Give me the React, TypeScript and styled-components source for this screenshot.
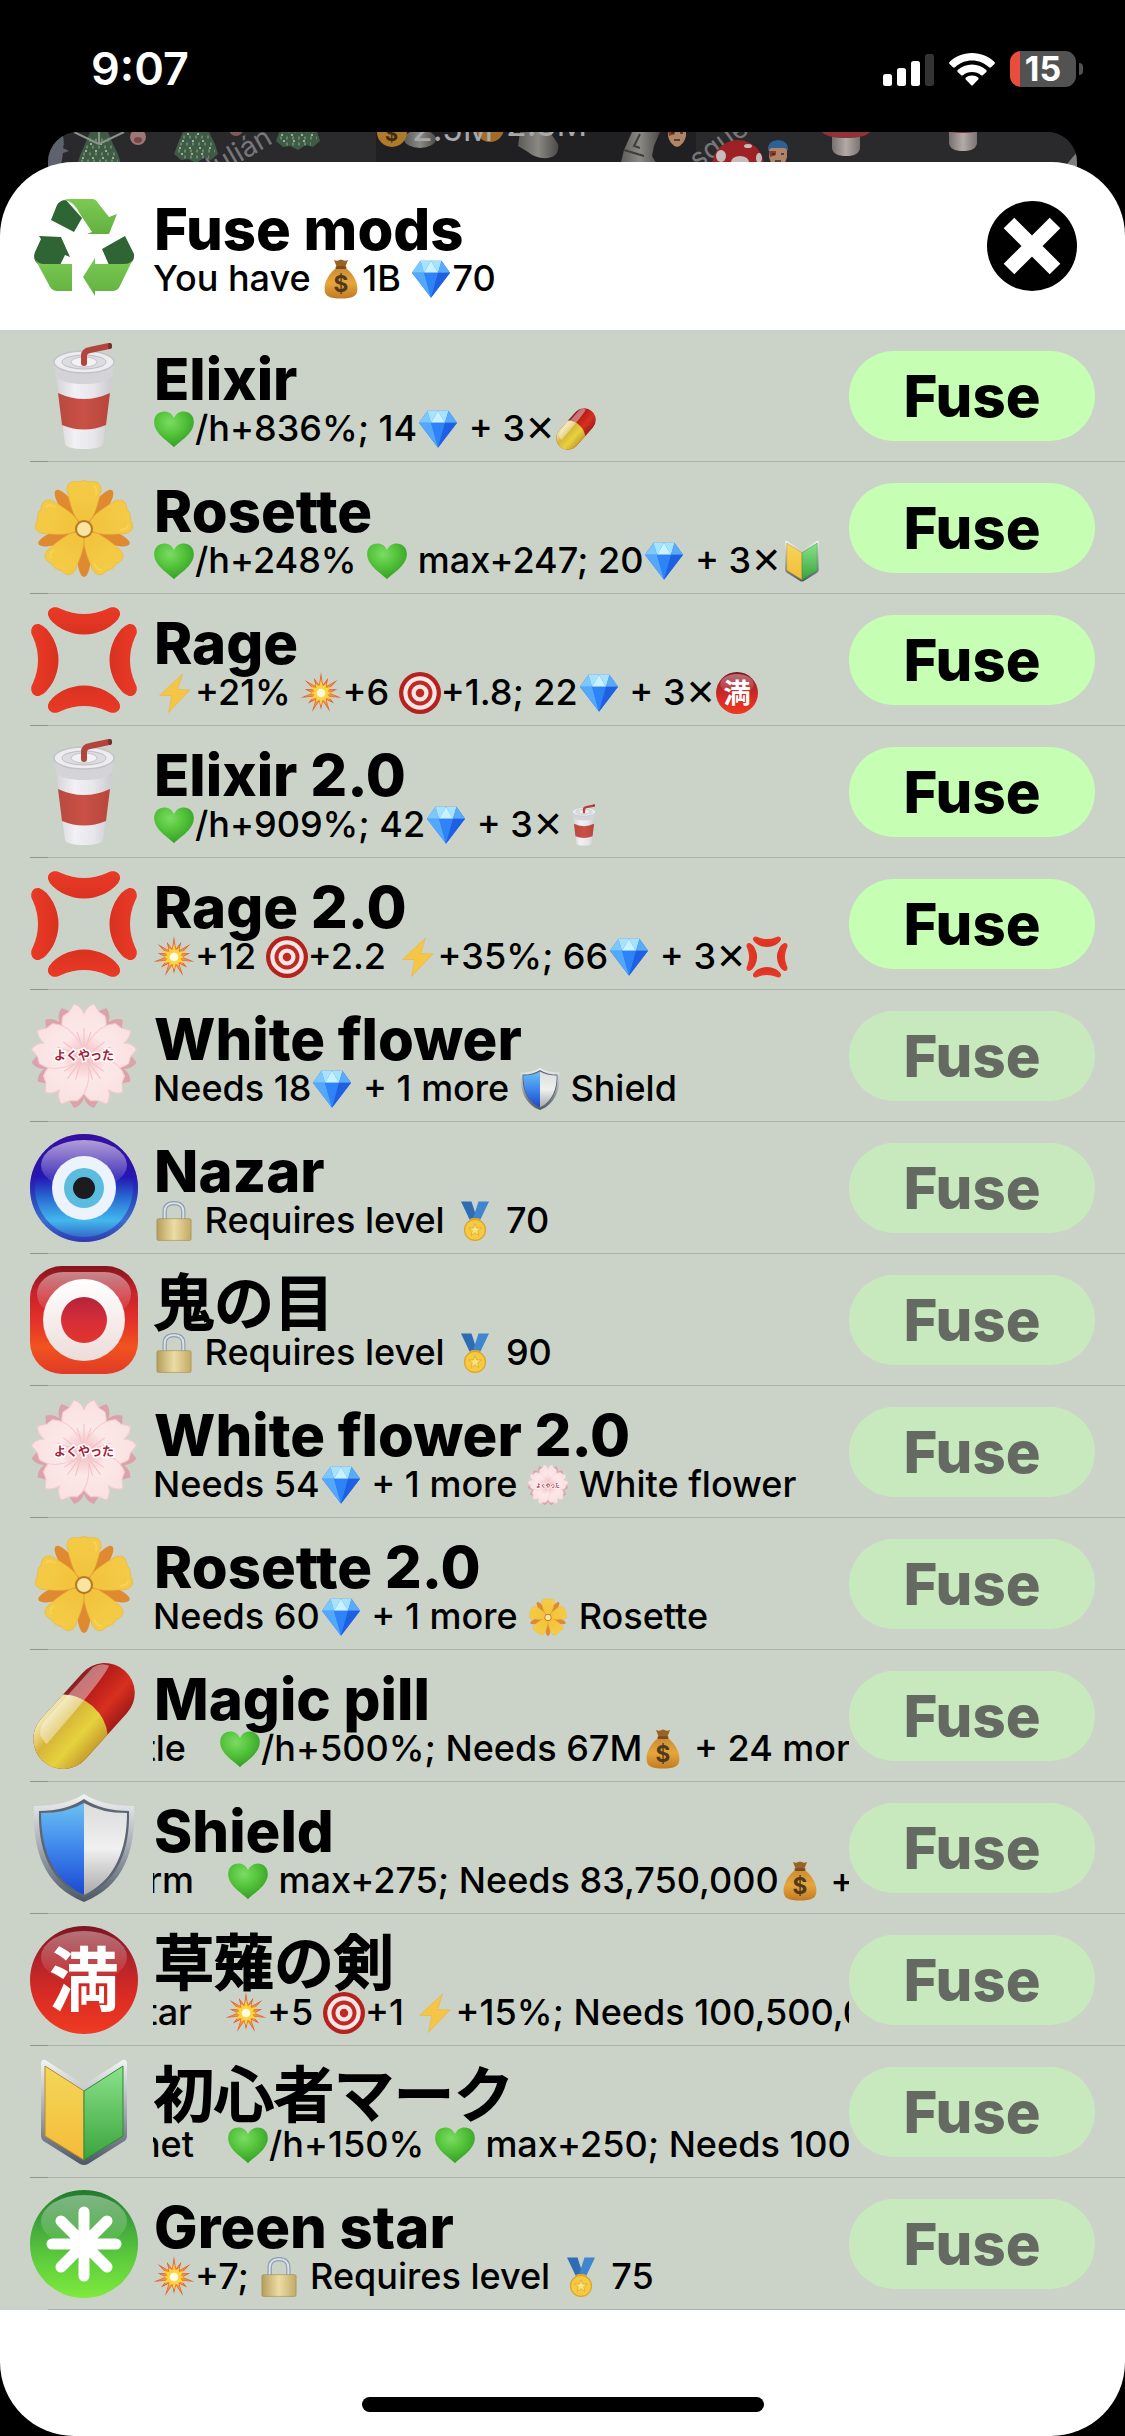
import React from "react";
import styled, { createGlobalStyle } from "styled-components";

const GlobalStyle = createGlobalStyle`
  * { box-sizing: border-box; }
  body { margin: 0; background: #000; }
  body, button {
    font-family: Inter, "Noto Sans CJK JP", "Liberation Sans", sans-serif;
    color: #000;
  }
  h1, h2, p, ul { margin: 0; padding: 0; }
`;

/* ---------- layout ---------- */

const Screen = styled.div`
  display: flex;
  flex-direction: column;
  min-height: 100vh;
  background: #000;
`;

const StatusBar = styled.header`
  display: flex;
  align-items: center;
  justify-content: space-between;
  height: 132px;
  padding: 6px 42px 0 91px;
`;

const Clock = styled.time`
  color: #fff;
  font-size: 45px;
  line-height: 54px;
  font-weight: 600;
`;

const StatusIcons = styled.div`
  display: flex;
  align-items: center;
  gap: 15px;
`;

const Battery = styled.div`
  display: flex;
  align-items: center;
  gap: 3px;
`;

const BatteryBody = styled.div`
  width: 66px;
  height: 36px;
  border-radius: 11px;
  background: linear-gradient(90deg, #eb4d3d 10px, #525252 10px);
  color: #fff;
  font-size: 34px;
  line-height: 36px;
  font-weight: 700;
  text-align: center;
`;

const BatteryTip = styled.div`
  width: 4px;
  height: 12px;
  border-radius: 0 6px 6px 0;
  background: #525252;
`;

const Backdrop = styled.div`
  height: 60px;
  margin: 0 48px;
  border-radius: 30px 30px 0 0;
  overflow: hidden;
  background: #27272a;
`;

const Sheet = styled.main`
  position: relative;
  display: flex;
  flex: 1;
  flex-direction: column;
  margin-top: -30px;
  border-radius: 74px;
  background: #fff;
  overflow: hidden;
`;

const SheetHeader = styled.div`
  display: flex;
  align-items: center;
  gap: 15px;
  padding: 30px 48px 30px 30px;
`;

const List = styled.ul`
  list-style: none;
  background: #cbd3c8;
`;

const Row = styled.li`
  display: flex;
  align-items: center;
  gap: 15px;
  height: 132px;
  padding: 0 30px;
  background:
    linear-gradient(#abb2a8, #abb2a8) 48px 100% / 100% 1px no-repeat,
    linear-gradient(#8f958d, #8f958d) 30px 100% / 18px 1px no-repeat;
  &:last-child {
    background: linear-gradient(#abb2a8, #abb2a8) 48px 100% / 100% 1px no-repeat;
  }
`;

const TextColumn = styled.div`
  flex: 1;
  min-width: 0;
  margin-right: -15px;
`;

const titleStyles = `
  padding-left: 1px;
  font-size: 58px;
  line-height: 64px;
  font-weight: 800;
  white-space: nowrap;
`;
const SheetTitle = styled.h1`${titleStyles}`;
const RowTitle = styled.h2`
  ${titleStyles}
  &:lang(ja) {
    font-size: 60px;
    font-weight: 500;
    -webkit-text-stroke: 2px #000;
  }
`;

const Detail = styled.p`
  font-size: 36px;
  line-height: 34px;
  font-weight: 500;
  white-space: pre;
  overflow-x: clip;
`;

const Times = styled.span`
  font-family: "DejaVu Sans", sans-serif;
  font-weight: 400;
  line-height: 1px;
`;

const TickerTail = styled.span<{ $width: number }>`
  display: inline-flex;
  justify-content: flex-end;
  width: ${(p) => p.$width}px;
  height: 34px;
  margin-right: 33px;
  overflow: hidden;
  vertical-align: top;
`;

const FuseButton = styled.button`
  flex: none;
  width: 246px;
  height: 90px;
  padding: 0;
  border: 0;
  border-radius: 45px;
  background: #c6ffb3;
  font-size: 58px;
  line-height: 90px;
  font-weight: 800;
  &:disabled {
    background: #c8e9be;
    color: #646a62;
  }
`;

const CloseButton = styled.button`
  display: flex;
  align-items: center;
  justify-content: center;
  flex: none;
  width: 90px;
  height: 90px;
  padding: 0;
  border: 0;
  border-radius: 50%;
  background: #000;
`;

const SheetFooter = styled.div`
  display: flex;
  flex: 1;
  align-items: flex-end;
  justify-content: center;
  min-height: 80px;
  padding-bottom: 24px;
`;

const HomeIndicator = styled.div`
  width: 402px;
  height: 15px;
  border-radius: 8px;
  background: #000;
`;

const Glyph = styled.svg`
  width: 108px;
  height: 108px;
  flex: none;
`;

const InlineGlyph = styled.svg`
  width: 42px;
  height: 42px;
  margin: -8px 0;
  vertical-align: -1px;
`;

const Sprites = styled.svg`
  position: absolute;
  width: 0;
  height: 0;
`;

/* ---------- artwork ---------- */

const Grad = ({ id, stops, h }: { id: string; stops: string[]; h?: boolean }) => (
  <linearGradient id={id} x1="0" y1="0" x2={h ? "1" : "0"} y2={h ? "0" : "1"}>
    {stops.map((c, i) => (
      <stop key={i} offset={i / (stops.length - 1)} stopColor={c} />
    ))}
  </linearGradient>
);

const turns = (n: number, start = 0) => Array.from({ length: n }, (_, i) => start + (i * 360) / n);

const burst = (points: number, outer: number, inner: number) =>
  Array.from({ length: points * 2 }, (_, i) => {
    const wobble = i % 4 === 0 ? 1 : 0.8;
    const r = i % 2 ? inner : outer * wobble;
    const a = (i * Math.PI) / points - Math.PI / 2;
    return `${(54 + r * Math.cos(a)).toFixed(1)},${(54 + r * Math.sin(a)).toFixed(1)}`;
  }).join(" ");

const BLOSSOM_PETAL = "M54 56C40 46 28 30 33 14L39 10L44 2Q51 4 54 12Q57 4 64 2L69 10L75 14C80 30 68 46 54 56Z";

const SpriteSheet = () => (
  <Sprites aria-hidden="true">
    <defs>
      <Grad id="g-leaf" stops={["#7cc954", "#62b13f"]} />
      <Grad id="g-cup" h stops={["#d3d3d8", "#f1f1f5", "#e6e6eb", "#cacad0"]} />
      <Grad id="g-band" h stops={["#b9493f", "#c95145", "#b8463c"]} />
      <Grad id="g-petal" stops={["#f4cb45", "#f2c33d"]} />
      <Grad id="g-anger" stops={["#ea3a26", "#da3220"]} />
      <Grad id="g-nazar" stops={["#3a0c9e", "#3310a8", "#2317b4", "#2a6fd4", "#43b8ee", "#2f55bd"]} />
      <Grad id="g-red" stops={["#7d1522", "#b3242a", "#dc2c23", "#ee3b22"]} />
      <Grad id="g-eye" stops={["#86141f", "#c8232b", "#e3302a", "#f0531f", "#e03a26"]} />
      <Grad id="g-iris" stops={["#b4233a", "#d62d38", "#e2352e"]} />
      <Grad id="g-white" stops={["#ffffff", "#ecdcda"]} />
      <Grad id="g-gloss" stops={["rgba(255,255,255,.6)", "rgba(255,255,255,0)"]} />
      <Grad id="g-green" stops={["#217a2c", "#42a83c", "#5fcf3c", "#7fea3e"]} />
      <Grad id="g-blue" stops={["#6cc0f2", "#3d86ec", "#1c48d2"]} />
      <Grad id="g-silver" stops={["#dcdcdc", "#f0f0f0", "#a9a9ab"]} />
      <Grad id="g-rim" stops={["#f3f3f3", "#a3a8b0", "#4d5765"]} />
      <Grad id="g-gold" stops={["#f3d75a", "#f5bb38"]} />
      <Grad id="g-lime" stops={["#8be28a", "#3aa43c"]} />
      <Grad id="g-yellowpill" stops={["#f1e9b4", "#d6b638", "#e6d23e", "#c8a02e"]} />
      <Grad id="g-redpill" stops={["#8c1f25", "#bb1f1b", "#d8301e", "#a31b1a"]} />
      <Grad id="g-bag" stops={["#c98a34", "#e6a63c", "#c27a24"]} />
      <Grad id="g-brass" h stops={["#b59e5c", "#ecdca4", "#c3aa66"]} />
      <Grad id="g-stalk" h stops={["#77706e", "#b3aba8", "#7a7371"]} />
      <Grad id="g-stone" h stops={["#5c5b58", "#8a8984", "#4b4a48"]} />
      <radialGradient id="g-heart" cx=".4" cy=".3" r=".75">
        <stop offset="0" stopColor="#7bdc63" />
        <stop offset=".45" stopColor="#55c43c" />
        <stop offset="1" stopColor="#2f9a23" />
      </radialGradient>
      <radialGradient id="g-blossom" gradientUnits="userSpaceOnUse" cx="54" cy="54" r="52">
        <stop offset="0" stopColor="#f3b9bf" />
        <stop offset=".45" stopColor="#fce8e8" />
        <stop offset="1" stopColor="#fae0e1" />
      </radialGradient>
    </defs>

    <symbol id="recycle" viewBox="0 0 108 108">
      <path fill="#2f6434" d="M21 28L27 13Q30 8 36 8L52 26L44 40Z" />
      <path fill="url(#g-leaf)" d="M34 8Q36 7 40 7H62Q66 7 68 11L79 25L87 22L79 42H57L62 40L50 22Q44 9 34 8Z" />
      <path fill="#2f6434" d="M9 44L31 45L40 65L35 63L30 73L9 73Q2 68 5 60L11 47ZM95 44L104 62Q105 69 98 73H79L72 57Z" />
      <path fill="url(#g-leaf)" d="M5 67Q8 72 14 72H42V99H26Q21 98 19 93ZM53 85L65 66V72H94Q101 72 103 67L90 94Q88 99 82 99H65V104Z" />
    </symbol>

    <symbol id="cup" viewBox="0 0 108 108">
      <path fill="url(#g-cup)" d="M26 32H82L73 102Q71 107 54 107Q37 107 35 102Z" />
      <path fill="url(#g-band)" d="M28 51Q54 63 80 51L76 83Q54 92 32 83Z" />
      <path fill="#d4d4d8" d="M24 19Q24 10 54 10Q84 10 84 19L82 34Q76 42 54 42Q32 42 26 34Z" />
      <ellipse cx="54" cy="20" rx="30" ry="11" fill="#ededf1" stroke="#c2c2c8" strokeWidth="1.5" />
      <ellipse cx="54" cy="20" rx="22" ry="7" fill="#dcdce0" stroke="#bcbcc2" strokeWidth="1" />
      <ellipse cx="54" cy="20" rx="13" ry="5" fill="#f1f1f4" stroke="#c5c5ca" strokeWidth="1" />
      <path d="M54 21V14Q54 9 60 8L79 4" fill="none" stroke="#b3443d" strokeWidth="6" strokeLinecap="round" />
      <ellipse cx="80" cy="4" rx="2" ry="3" fill="#7c2d2a" />
    </symbol>

    <symbol id="rosette" viewBox="0 0 108 108">
      {turns(5, 36).map((a) => (
        <ellipse key={a} cx="54" cy="30" rx="7" ry="23" fill="#df8a30" transform={`rotate(${a} 54 55)`} />
      ))}
      {turns(5).map((a) => (
        <g key={a} transform={`rotate(${a} 54 55)`}>
          <path fill="url(#g-petal)" stroke="#eab23a" strokeWidth=".6" d="M54 49C44 49 40 28 37 17C36 9 42 6 48 8Q54 5 60 8C66 6 72 9 71 17C68 28 64 49 54 49Z" />
          <path fill="none" stroke="#f8d968" strokeWidth="2" opacity=".6" d="M63 12Q68 13 66 21" />
        </g>
      ))}
      <circle cx="54" cy="55" r="9" fill="#b97721" />
      <circle cx="54" cy="55" r="7" fill="#f8e5a4" />
    </symbol>

    <symbol id="anger" viewBox="0 0 108 108">
      {turns(4).map((a) => (
        <path key={a} transform={`rotate(${a} 54 54)`} fill="url(#g-anger)" d="M18 9C17 2 25 -1 31 3Q54 13 77 3C83 -1 91 2 90 9Q88 16 76 23Q54 34 32 23Q20 16 18 9Z" />
      ))}
    </symbol>

    <symbol id="blossom" viewBox="0 0 108 108">
      {turns(5, 36).map((a) => (
        <path key={a} d={BLOSSOM_PETAL} fill="#dba3a9" transform={`rotate(${a} 54 54)`} />
      ))}
      {turns(5).map((a) => (
        <g key={a} transform={`rotate(${a} 54 54)`}>
          <path d={BLOSSOM_PETAL} fill="url(#g-blossom)" stroke="#f2cbce" strokeWidth="1" />
          <path d="M54 50V26M54 50L47 30M54 50L61 30" stroke="#f3bfc4" strokeWidth="1" fill="none" />
        </g>
      ))}
      <text x="54" y="58" textAnchor="middle" fontSize="12" fontWeight="700" fill="#a3213a" stroke="#fff" strokeWidth="3" paintOrder="stroke" fontFamily="Noto Sans CJK JP, sans-serif">
        よくやった
      </text>
    </symbol>

    <symbol id="nazar" viewBox="0 0 108 108">
      <circle cx="54" cy="54" r="54" fill="url(#g-nazar)" />
      <path d="M54 0A54 54 0 0 0 54 108A54 54 0 0 0 54 0ZM54 5A49 49 0 0 1 54 103A49 49 0 0 1 54 5Z" fill="#2f16a4" fillRule="evenodd" opacity=".45" />
      <ellipse cx="54" cy="31" rx="43" ry="25" fill="url(#g-gloss)" />
      <circle cx="54" cy="54" r="32" fill="#edf3fd" />
      <circle cx="54" cy="54" r="20" fill="#5bbce0" />
      <circle cx="54" cy="54" r="11" fill="#1c1c1e" />
    </symbol>

    <symbol id="oni" viewBox="0 0 108 108">
      <rect width="108" height="108" rx="32" fill="url(#g-eye)" />
      <rect x="7" y="6" width="94" height="44" rx="26" fill="url(#g-gloss)" opacity=".8" />
      <circle cx="54" cy="54" r="41" fill="url(#g-white)" />
      <circle cx="54" cy="54" r="23" fill="url(#g-iris)" />
    </symbol>

    <symbol id="pill" viewBox="0 0 108 108">
      <g transform="translate(54 54) rotate(-48)">
        <rect x="-61" y="-30" width="122" height="60" rx="30" fill="url(#g-redpill)" />
        <path d="M-31 -30H2Q13 -18 13 0Q13 18 2 30H-31A30 30 0 0 1 -31 -30Z" fill="url(#g-yellowpill)" />
        <path d="M-44 -19Q-38 -26 -30 -26H42Q52 -23 54 -15Q40 -10 -46 -9Z" fill="#fff" opacity=".4" />
      </g>
    </symbol>

    <symbol id="shield" viewBox="0 0 108 108">
      <path fill="url(#g-rim)" d="M54 0Q72 12 104 12C106 56 94 92 54 108C14 92 2 56 4 12Q36 12 54 0Z" />
      <path fill="#5b6674" d="M54 5Q72 17 99 17C100 54 89 88 54 103C19 88 8 54 9 17Q36 17 54 5Z" />
      <path fill="url(#g-blue)" d="M54 9V101C22 86 11 54 11 19Q37 19 54 9Z" />
      <path fill="url(#g-silver)" d="M54 9V101C86 86 97 54 97 19Q71 19 54 9Z" />
    </symbol>

    <symbol id="full" viewBox="0 0 108 108">
      <circle cx="54" cy="54" r="54" fill="url(#g-red)" />
      <ellipse cx="54" cy="31" rx="43" ry="26" fill="url(#g-gloss)" opacity=".65" />
      <text x="54" y="80" textAnchor="middle" fontSize="70" fontWeight="700" fill="#fff" fontFamily="Noto Sans CJK JP, sans-serif">
        満
      </text>
    </symbol>

    <symbol id="beginner" viewBox="0 0 108 108">
      <path fill="url(#g-rim)" d="M11 4Q13 0 17 3L54 27L91 3Q95 0 97 4V78Q97 82 93 84L58 106Q54 108 50 106L15 84Q11 82 11 78Z" />
      <path fill="url(#g-gold)" stroke="#b78b2a" strokeWidth="1" d="M15 8L54 33V102L15 78Z" />
      <path fill="url(#g-lime)" stroke="#2f8a35" strokeWidth="1" d="M93 8L54 33V102L93 78Z" />
    </symbol>

    <symbol id="star" viewBox="0 0 108 108">
      <circle cx="54" cy="54" r="54" fill="url(#g-green)" />
      <ellipse cx="54" cy="31" rx="43" ry="26" fill="url(#g-gloss)" opacity=".7" />
      <path d="M54 22V86M22 54H86M31 31L77 77M77 31L31 77" stroke="#fff" strokeWidth="11" strokeLinecap="round" />
    </symbol>

    <symbol id="heart" viewBox="0 0 108 108">
      <path fill="url(#g-heart)" d="M54 101C44 88 3 68 3 36C3 19 15 9 29 9C41 9 50 16 54 26C58 16 67 9 79 9C93 9 105 19 105 36C105 68 64 88 54 101Z" />
    </symbol>

    <symbol id="gem" viewBox="0 0 108 108">
      <path fill="#2c7bf3" d="M5 38L27 7H81L103 38L54 102Z" />
      <path fill="#7cc8fb" d="M5 38L27 7L36 38Z" />
      <path fill="#a6e3fd" d="M27 7H54L36 38ZM54 7H81L72 38Z" />
      <path fill="#c9f2ff" d="M54 7L72 38H36Z" />
      <path fill="#5ba9f9" d="M81 7L103 38H72Z" />
      <path fill="#54a8fb" d="M5 38H36L54 102Z" />
      <path fill="#2e84f7" d="M36 38H72L54 102Z" />
      <path fill="#1f5fe2" d="M72 38H103L54 102Z" />
    </symbol>

    <symbol id="bolt" viewBox="0 0 108 108">
      <path fill="#f5c645" stroke="#eab23c" strokeWidth="1.5" d="M76 5L17 60L48 61L40 104L95 46L63 45Z" />
    </symbol>

    <symbol id="boom" viewBox="0 0 108 108">
      <polygon points={burst(14, 54, 22)} fill="#e0562f" />
      <polygon points={burst(14, 43, 20)} fill="#f3932f" />
      <polygon points={burst(12, 32, 17)} fill="#fbd544" />
      <circle cx="54" cy="54" r="11" fill="#fffbe0" />
    </symbol>

    <symbol id="target" viewBox="0 0 108 108">
      <circle cx="54" cy="54" r="54" fill="#b5211c" />
      <circle cx="54" cy="54" r="43" fill="#f2e7e6" />
      <circle cx="54" cy="54" r="32" fill="#bf2a23" />
      <circle cx="54" cy="54" r="22" fill="#f2e7e6" />
      <circle cx="54" cy="54" r="11" fill="#bf2a23" />
    </symbol>

    <symbol id="lock" viewBox="0 0 108 108">
      <path d="M30 56V30Q30 8 54 8Q78 8 78 30V56" fill="none" stroke="#8f9dac" strokeWidth="11" />
      <path d="M30 56V30Q30 8 54 8Q78 8 78 30V56" fill="none" stroke="#d9e2ec" strokeWidth="5" />
      <rect x="10" y="48" width="88" height="56" rx="4" fill="url(#g-brass)" stroke="#9d8850" strokeWidth="1.5" />
    </symbol>

    <symbol id="medal" viewBox="0 0 108 108">
      <path fill="#2e6cb4" d="M18 4H45L60 50H40Z" />
      <path fill="#3f86cf" d="M90 4H63L48 50H68Z" />
      <rect x="42" y="46" width="24" height="10" rx="4" fill="#dba72f" />
      <circle cx="54" cy="77" r="27" fill="#f6ca40" stroke="#dca42e" strokeWidth="3" />
      <path fill="#fbe480" stroke="#d39a28" strokeWidth="1.5" d="M54 61L58 72L70 72L61 79L64 91L54 84L44 91L47 79L38 72L50 72Z" />
    </symbol>

    <symbol id="money" viewBox="0 0 108 108">
      <path fill="#9a6323" d="M36 5Q44 9 50 5Q54 3 58 5Q64 9 72 5L64 26H44Z" />
      <path fill="url(#g-bag)" d="M44 24H64C84 38 98 62 96 82C95 98 84 104 54 104C24 104 13 98 12 82C10 62 24 38 44 24Z" />
      <rect x="40" y="21" width="28" height="7" rx="3" fill="#7d4c1c" />
      <text x="54" y="88" textAnchor="middle" fontSize="58" fontWeight="700" fill="#4f3a1c" fontFamily="Inter, sans-serif">
        $
      </text>
    </symbol>
  </Sprites>
);

const Emoji = ({ name }: { name: string }) => (
  <InlineGlyph aria-hidden="true">
    <use href={`#${name}`} />
  </InlineGlyph>
);

const Tree = ({ x, y }: { x: number; y: number }) => (
  <g transform={`translate(${x} ${y})`}>
    <path fill="#3f5a45" d="M-9 -24L9 -24L14 -12L19 -2L22 8L15 14L8 12L0 17L-8 13L-15 14L-22 8L-18 -3L-14 -12Z" />
    <path stroke="#66866b" strokeWidth="3" strokeDasharray="2 4" fill="none" d="M-10 -16H10M-13 -9H14M-16 -2H17M-18 5H19M-12 11H13" />
    <path stroke="#a3ad91" strokeWidth="2" strokeDasharray="2 8" fill="none" d="M-9 -12H10M-14 -5H15M-17 2H18M-15 8H14" />
  </g>
);

const Toadstool = ({ x, y }: { x: number; y: number }) => (
  <g transform={`translate(${x} ${y})`}>
    <path fill="url(#g-stalk)" d="M-14 0H14V16Q13 24 0 24Q-13 24 -14 16Z" />
    <path fill="#8d3438" d="M-26 -4Q-24 6 0 6Q24 6 26 -4V-20H-26Z" />
  </g>
);

const Face = ({ x, y, hair }: { x: number; y: number; hair: string }) => (
  <g transform={`translate(${x} ${y})`}>
    <path fill="#b08468" d="M-9 -8H9V3Q7 12 0 14Q-7 12 -9 3Z" />
    <path fill={hair} d="M-10 -3Q-11 -13 0 -14Q11 -13 10 -3L7 -6H-7Z" />
    <path fill="#8d3a2c" d="M-9 -3H-2V1L-8 3Z" />
    <path stroke="#3c2a22" strokeWidth="1.5" d="M-6 0H-3M3 0H6M-3 7H3" />
  </g>
);

const BattleScene = () => (
  <svg width="100%" height="60" viewBox="0 0 1029 60" preserveAspectRatio="xMidYMin slice" aria-hidden="true">
    <rect width="1029" height="60" fill="#2a2a2d" />
    <rect x="328" width="320" height="60" fill="#202023" />
    <path d="M0 0H14Q17 10 15 16L21 19L15 21L12 40H0Z" fill="#5d626d" />
    <Tree x={51} y={24} />
    <path stroke="#8a948a" strokeWidth="2" fill="none" d="M51 12L26 0M51 12L76 0M51 12V0" />
    <Tree x={148} y={14} />
    <Tree x={250} y={1} />
    <circle cx="90" cy="5" r="8" fill="#9c7775" />
    <ellipse cx="90" cy="8" rx="4" ry="3" fill="#744846" />
    <circle cx="188" cy="-3" r="7" fill="#805b59" />
    <text x="158" y="50" fontSize="28" fill="#77777a" transform="rotate(-30 158 50)">
      Julián
    </text>
    <ellipse cx="372" cy="7" rx="16" ry="9" fill="url(#g-stone)" />
    <circle cx="344" cy="0" r="15" fill="#b07a2b" />
    <text x="337" y="9" fontSize="20" fontWeight="700" fill="#3d2c17">$</text>
    <circle cx="442" cy="-4" r="14" fill="#a06c27" />
    <path fill="url(#g-stone)" d="M472 0H502L510 12Q512 24 500 26Q488 27 480 20L470 14Z" />
    <text x="364" y="9" fontSize="34" fill="#a9a9ab">2.5M</text>
    <text x="458" y="4" fontSize="34" fill="#a9a9ab">2.3M</text>
    <path fill="url(#g-stone)" d="M584 0H612L606 14L604 24L610 34H572L576 18Z" />
    <path stroke="#3f3e3c" strokeWidth="2" fill="none" d="M592 2L586 14L592 16M576 18L596 24" />
    <Face x={629} y={1} hair="#5b3427" />
    <text x="650" y="38" fontSize="28" fill="#77777a" transform="rotate(-36 650 38)">sque</text>
    <circle cx="690" cy="34" r="26" fill="#9d2226" />
    <ellipse cx="692" cy="30" rx="9" ry="6" fill="#c9bcbc" />
    <ellipse cx="673" cy="24" rx="5" ry="6" fill="#c9bcbc" />
    <ellipse cx="700" cy="14" rx="4" ry="2" fill="#c9bcbc" />
    <ellipse cx="711" cy="26" rx="3" ry="5" fill="#c9bcbc" />
    <Face x={730} y={22} hair="#2c6096" />
    <Toadstool x={798} y={0} />
    <Toadstool x={915} y={-5} />
    <path d="M1014 38L1029 20V40Z" fill="#7e7e82" />
  </svg>
);

const SignalIcon = () => (
  <svg width="51" height="33" viewBox="0 0 51 33" aria-hidden="true">
    <rect x="0" y="21" width="9" height="12" rx="2.5" fill="#fff" />
    <rect x="14" y="15" width="9" height="18" rx="2.5" fill="#fff" />
    <rect x="28" y="8" width="9" height="25" rx="2.5" fill="#fff" />
    <rect x="42" y="1" width="9" height="32" rx="2.5" fill="#333" />
  </svg>
);

const WifiIcon = () => (
  <svg width="46" height="33" viewBox="0 0 46 33" aria-hidden="true">
    <path fill="#fff" d="M23 0C32 0 40 3.500 45.500 9Q46.300 10 45.500 11L42 14.300Q41 15 40 14.300C35.500 10 29.500 7.500 23 7.500S10.500 10 6 14.300Q5 15 4 14.300L.5 11Q-.3 10 .5 9C6 3.500 14 0 23 0Z" />
    <path fill="#fff" d="M23 11.500C28.500 11.500 33.500 13.700 37.300 17Q38.200 18 37.300 19L33.800 22.200Q33 23 32 22.200C29.500 20.200 26.500 19 23 19S16.500 20.200 14 22.200Q13 23 12.200 22.200L8.700 19Q7.800 18 8.700 17C12.500 13.700 17.500 11.500 23 11.500Z" />
    <path fill="#fff" d="M23 22.500C25.500 22.500 27.700 23.400 29.300 24.800Q30 25.700 29.200 26.600L24 32Q23 33 22 32L16.800 26.600Q16 25.700 16.700 24.800C18.300 23.400 20.500 22.500 23 22.500Z" />
  </svg>
);

const CrossIcon = () => (
  <svg width="60" height="60" viewBox="0 0 60 60" aria-hidden="true">
    <path d="M7 7L53 53M53 7L7 53" stroke="#fff" strokeWidth="15" />
  </svg>
);

/* ---------- data ---------- */

type Mod = { icon: string; name: string; detail: string; ready?: boolean; ja?: boolean; tail?: [string, number] };

const mods: Mod[] = [
  { icon: "cup", name: "Elixir", detail: "{heart}/h+836%; 14{gem} + 3✕{pill}", ready: true },
  { icon: "rosette", name: "Rosette", detail: "{heart}/h+248% {heart} max+247; 20{gem} + 3✕{beginner}", ready: true },
  { icon: "anger", name: "Rage", detail: "{bolt}+21% {boom}+6 {target}+1.8; 22{gem} + 3✕{full}", ready: true },
  { icon: "cup", name: "Elixir 2.0", detail: "{heart}/h+909%; 42{gem} + 3✕{cup}", ready: true },
  { icon: "anger", name: "Rage 2.0", detail: "{boom}+12 {target}+2.2 {bolt}+35%; 66{gem} + 3✕{anger}", ready: true },
  { icon: "blossom", name: "White flower", detail: "Needs 18{gem} + 1 more {shield} Shield" },
  { icon: "nazar", name: "Nazar", detail: "{lock} Requires level {medal} 70" },
  { icon: "oni", name: "鬼の目", ja: true, detail: "{lock} Requires level {medal} 90" },
  { icon: "blossom", name: "White flower 2.0", detail: "Needs 54{gem} + 1 more {blossom} White flower" },
  { icon: "rosette", name: "Rosette 2.0", detail: "Needs 60{gem} + 1 more {rosette} Rosette" },
  { icon: "pill", name: "Magic pill", tail: ["tle", 33], detail: "{heart}/h+500%; Needs 67M{money} + 24 more" },
  { icon: "shield", name: "Shield", tail: ["rm", 41], detail: "{heart} max+275; Needs 83,750,000{money} +" },
  { icon: "full", name: "草薙の剣", ja: true, tail: ["tar", 39], detail: "{boom}+5 {target}+1 {bolt}+15%; Needs 100,500,0" },
  { icon: "beginner", name: "初心者マーク", ja: true, tail: ["net", 41], detail: "{heart}/h+150% {heart} max+250; Needs 100" },
  { icon: "star", name: "Green star", detail: "{boom}+7; {lock} Requires level {medal} 75" },
];

/* Splits "20{gem} + 3✕" into plain text, inline glyphs and the multiplication cross. */
const RichText = ({ value }: { value: string }) => (
  <>
    {value.split(/(\{\w+\}|✕)/).map((part, i) => {
      if (part === "✕") return <Times key={i}>{part}</Times>;
      if (part.startsWith("{")) return <Emoji key={i} name={part.slice(1, -1)} />;
      return part;
    })}
  </>
);

export default function App() {
  return (
    <Screen>
      <GlobalStyle />
      <SpriteSheet />
      <StatusBar>
        <Clock>9:07</Clock>
        <StatusIcons>
          <SignalIcon />
          <WifiIcon />
          <Battery>
            <BatteryBody>15</BatteryBody>
            <BatteryTip />
          </Battery>
        </StatusIcons>
      </StatusBar>
      <Backdrop>
        <BattleScene />
      </Backdrop>
      <Sheet>
        <SheetHeader>
          <Glyph aria-hidden="true">
            <use href="#recycle" />
          </Glyph>
          <TextColumn>
            <SheetTitle>Fuse mods</SheetTitle>
            <Detail>
              <RichText value="You have {money}1B {gem}70" />
            </Detail>
          </TextColumn>
          <CloseButton aria-label="Close">
            <CrossIcon />
          </CloseButton>
        </SheetHeader>
        <List>
          {mods.map((mod) => (
            <Row key={mod.name}>
              <Glyph aria-hidden="true">
                <use href={`#${mod.icon}`} />
              </Glyph>
              <TextColumn>
                <RowTitle lang={mod.ja ? "ja" : "en"}>{mod.name}</RowTitle>
                <Detail>
                  {mod.tail && <TickerTail $width={mod.tail[1]}>{mod.tail[0]}</TickerTail>}
                  <RichText value={mod.detail} />
                </Detail>
              </TextColumn>
              <FuseButton disabled={!mod.ready}>Fuse</FuseButton>
            </Row>
          ))}
        </List>
        <SheetFooter>
          <HomeIndicator />
        </SheetFooter>
      </Sheet>
    </Screen>
  );
}
